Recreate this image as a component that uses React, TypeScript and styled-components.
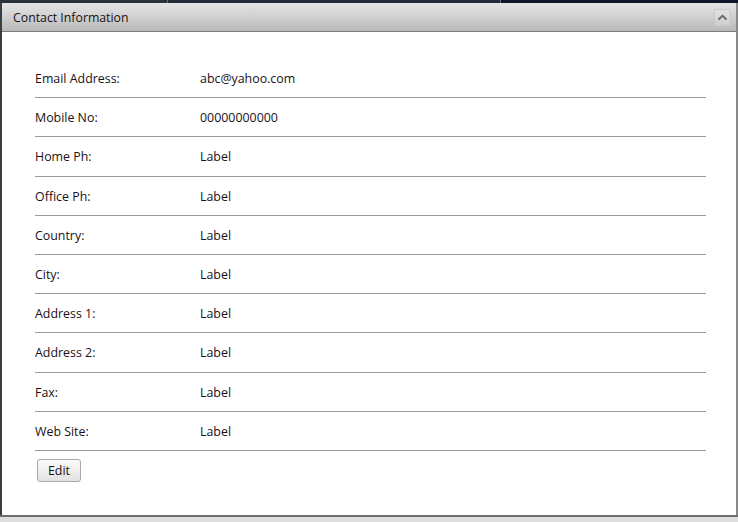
import React from "react";
import styled, { createGlobalStyle } from "styled-components";

const Global = createGlobalStyle`
  html, body { margin: 0; padding: 0; background: #ffffff; }
  body { font-family: "Open Sans", "Noto Sans", "Liberation Sans", sans-serif; }
`;

const Page = styled.div`
  width: 738px;
  height: 522px;
  display: flex;
  flex-direction: column;
  overflow: hidden;
`;

const TopStrip = styled.div`
  height: 3px;
  display: flex;
  flex-shrink: 0;
`;

const StripSeg = styled.div<{ $w: number; $c: string }>`
  width: ${(p) => p.$w}px;
  flex-shrink: 0;
  background: ${(p) => p.$c};
  border-right: 1px solid #6a6e78;
  &:last-child { flex: 1; border-right: none; }
`;

const Panel = styled.div`
  flex: 1;
  display: flex;
  flex-direction: column;
  border-left: 2px solid #3a3d44;
  border-right: 2px solid #8a8a8a;
  min-height: 0;
`;

const Header = styled.div`
  height: 28px;
  flex-shrink: 0;
  display: flex;
  align-items: center;
  justify-content: space-between;
  padding: 0 5px 0 11px;
  background: linear-gradient(to bottom, #e4e4e4 0%, #d2d2d2 45%, #b9b9b9 100%);
  border-bottom: 1px solid #7d7d7d;
`;

const Title = styled.span`
  font-size: 12.3px;
  color: #1a1016;
`;

const CollapseBtn = styled.div`
  width: 15px;
  height: 15px;
  border: 1px solid #c8c8c8;
  border-radius: 2px;
  background: linear-gradient(to bottom, #e2e2e2, #cfcfcf);
  display: flex;
  align-items: center;
  justify-content: center;
  margin-top: 1px;
`;

const Body = styled.div`
  flex: 1;
  background: #ffffff;
  padding: 27px 30px 0 33px;
`;

const Row = styled.div`
  height: 38.2px;
  display: grid;
  grid-template-columns: 165px 1fr;
  align-items: center;
  border-bottom: 1px solid #9a9a9a;
  font-size: 12.4px;
  color: #1a1016;
`;

const Cell = styled.span`
  line-height: 16px;
  padding-top: 2px;
`;

const EditButton = styled.button`
  margin: 8px 0 0 2px;
  width: 44px;
  height: 23px;
  border: 1px solid #a9a9a9;
  border-radius: 3px;
  background: linear-gradient(to bottom, #fbfbfb 0%, #efefef 50%, #e2e2e2 100%);
  font-family: "Open Sans", "Noto Sans", sans-serif;
  font-size: 12.4px;
  color: #111;
  padding: 0;
`;

const Footer = styled.div`
  height: 5px;
  flex-shrink: 0;
  border-top: 2px solid #6e6e6e;
  background: #dedede;
`;

const rows: [string, string][] = [
  ["Email Address:", "abc@yahoo.com"],
  ["Mobile No:", "00000000000"],
  ["Home Ph:", "Label"],
  ["Office Ph:", "Label"],
  ["Country:", "Label"],
  ["City:", "Label"],
  ["Address 1:", "Label"],
  ["Address 2:", "Label"],
  ["Fax:", "Label"],
  ["Web Site:", "Label"],
];

export default function App() {
  return (
    <Page>
      <Global />
      <TopStrip>
        <StripSeg $w={167} $c="#2b303d" />
        <StripSeg $w={332} $c="#262b39" />
        <StripSeg $w={0} $c="#0f1426" />
      </TopStrip>
      <Panel>
        <Header>
          <Title>Contact Information</Title>
          <CollapseBtn>
            <svg width="11" height="7" viewBox="0 0 11 7">
              <path d="M1.5 5.5 L5.5 1.8 L9.5 5.5" fill="none" stroke="#6b6b6b" strokeWidth="2" />
            </svg>
          </CollapseBtn>
        </Header>
        <Body>
          {rows.map(([k, v]) => (
            <Row key={k}>
              <Cell>{k}</Cell>
              <Cell>{v}</Cell>
            </Row>
          ))}
          <EditButton>Edit</EditButton>
        </Body>
      </Panel>
      <Footer />
    </Page>
  );
}
